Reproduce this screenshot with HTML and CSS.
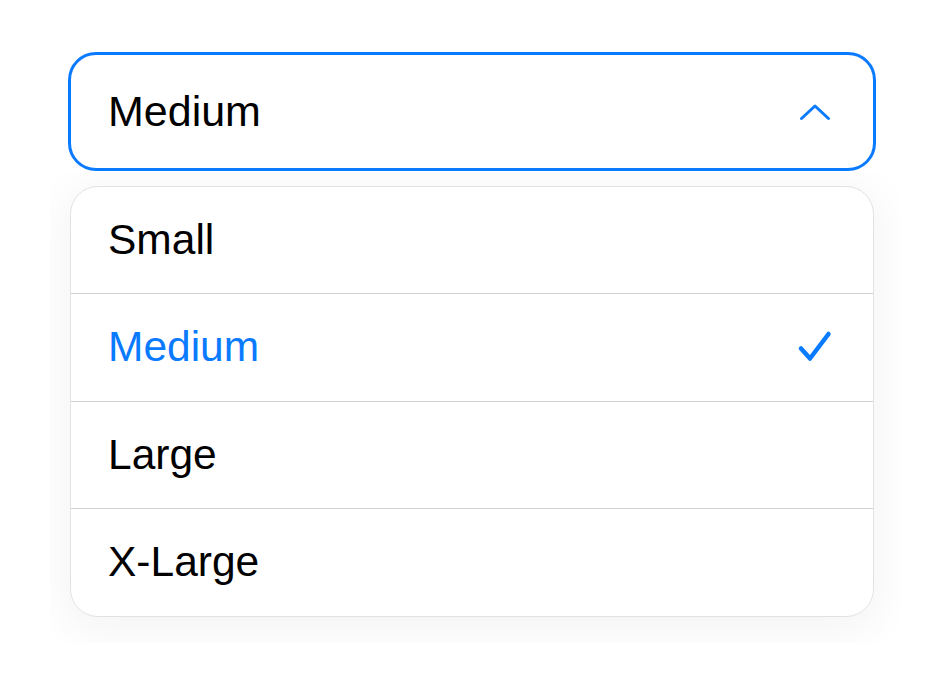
FILE: index.html
```html
<!DOCTYPE html>
<html lang="en">
<head>
    <meta charset="UTF-8">
    <meta name="viewport" content="width=device-width, initial-scale=1.0">
    <title>Size picker</title>
    <link rel="stylesheet" href="styles.css">
</head>
<body>
    <div class="picker">
        <button class="picker-trigger" type="button">
            <span class="picker-value">Medium</span>
            <svg class="chevron" width="32" height="18" viewBox="0 0 32 18" aria-hidden="true">
                <path d="M2.5 15.5 L16 3 L29.5 15.5" fill="none" stroke="currentColor" stroke-width="3" stroke-linecap="round" stroke-linejoin="round"/>
            </svg>
        </button>

        <div class="picker-shadow">
            <ul class="picker-list">
                <li class="picker-option">Small</li>
                <li class="picker-option selected">
                    <span>Medium</span>
                    <svg class="check" width="36" height="34" viewBox="0 0 36 34" aria-hidden="true">
                        <path d="M4 18.5 L13 28.5 L31.5 4" fill="none" stroke="currentColor" stroke-width="4.5" stroke-linecap="round" stroke-linejoin="round"/>
                    </svg>
                </li>
                <li class="picker-option">Large</li>
                <li class="picker-option">X-Large</li>
            </ul>
        </div>
    </div>
</body>
</html>
```

FILE: styles.css
```css
body {
    margin: 0;
    background: #ffffff;
    font-family: 'Liberation Sans', Arial, sans-serif;
    color: #000;
}

.picker {
    width: 808px;
    padding: 52px 0 0 68px;
}

.picker-trigger {
    display: flex;
    align-items: center;
    justify-content: space-between;
    width: 808px;
    height: 119px;
    padding: 0 42px 0 37px;
    box-sizing: border-box;
    border: 3px solid #0a7aff;
    border-radius: 28px;
    background: #fff;
    font-family: inherit;
    font-size: 43px;
    color: #000;
    text-align: left;
}

.chevron {
    color: #0a7aff;
}

.picker-shadow {
    width: 850px;
    margin: 1px 0 0 -18px;
    padding: 14px 26px 26px 20px;
    box-sizing: border-box;
    overflow: hidden;
}

.picker-list {
    list-style: none;
    margin: 0;
    padding: 0;
    width: 804px;
    background: #fff;
    border: 1.5px solid #e2e2e2;
    border-radius: 28px;
    box-sizing: border-box;
    box-shadow: 0 8px 40px 8px rgba(0, 0, 0, 0.045);
    overflow: hidden;
}

.picker-option {
    display: flex;
    align-items: center;
    justify-content: space-between;
    height: 107.5px;
    padding: 0 40px 0 37px;
    font-size: 42.5px;
    border-top: 1px solid #d2d2d2;
    box-sizing: border-box;
}

.picker-option:first-child {
    height: 106px;
    border-top: none;
}

.picker-option.selected {
    color: #0a7aff;
}
```
